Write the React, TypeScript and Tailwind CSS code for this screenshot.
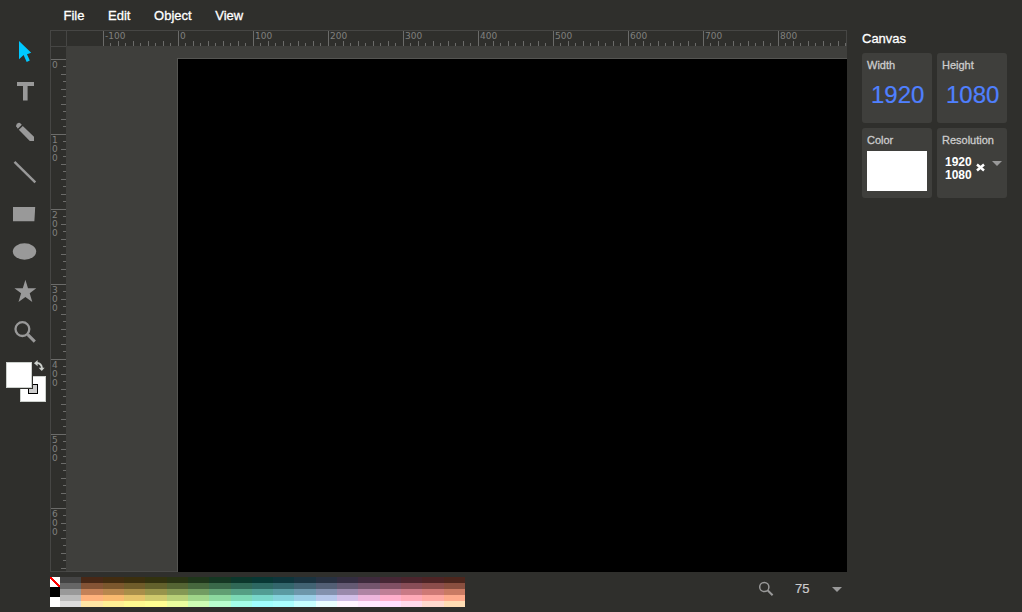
import React from 'react';

const MENUS = ['File', 'Edit', 'Object', 'View'];

const PALETTE = [
  [
    '#444444', '#482816', '#422C10', '#3B2F0E', '#32320F', '#2A3414', '#1F361B', '#153723', '#0C372C', '#083734',
    '#0E353B', '#1A333F', '#273141', '#332D40', '#3E2A3C', '#462735', '#4B252D', '#4D2425', '#4C261D',
  ],
  [
    '#666666', '#845335', '#7B572D', '#6F5C2A', '#62612C', '#546433', '#46673D', '#396849', '#306856', '#2D6862',
    '#33666C', '#426373', '#535F75', '#645A73', '#74556D', '#805064', '#884D57', '#8B4D4B', '#894F3F',
  ],
  [
    '#999999', '#C48157', '#B8874D', '#A98E49', '#97944B', '#849854', '#729C62', '#619E73', '#559E84', '#529D94',
    '#5B9BA2', '#6D97AB', '#8391AE', '#9A8AAB', '#AF84A3', '#BF7F96', '#C97A86', '#CE7975', '#CA7B63',
  ],
  [
    '#BBBBBB', '#FFB27C', '#FABA6F', '#E6C36A', '#CFCA6D', '#B8D078', '#A0D58A', '#8DD8A0', '#7DD8B5', '#79D7CA',
    '#84D3DB', '#9ACEE6', '#B6C7EA', '#D2BFE7', '#EEB6DC', '#FFAFCC', '#FFAAB8', '#FFA9A2', '#FFAB8C',
  ],
  [
    '#DDDDDD', '#FFE6A5', '#FFF095', '#FFFA90', '#FFFF92', '#EBFF9F', '#CEFFB5', '#BAFFD0', '#A5FFEA', '#A1FFFF',
    '#ABFFFF', '#C7FFFF', '#EAFFFF', '#FFF6FF', '#FFEBFF', '#FFE0FF', '#FFDBEC', '#FFDACF', '#FFDDB4',
  ],
];

// 10 canvas units at 75% zoom
const STEP = 7.5;

function TopRuler() {
  const ticks = Array.from({ length: 100 }, (_, i) => i);
  const labels = Array.from({ length: 10 }, (_, i) => i);
  return (
    <svg width="779" height="15" className="block" shapeRendering="crispEdges">
      {ticks.map((i) => {
        const h = i % 10 === 0 ? 15 : i % 2 === 0 ? 5 : 3;
        return <rect key={i} x={36 + Math.floor(i * STEP)} y={15 - h} width="1" height={h} fill="#6b6b69" />;
      })}
      {labels.map((i) => (
        <text key={i} x={38 + i * 75} y="8" fontSize="9" fill="#80807e" fontFamily="DejaVu Sans, sans-serif">
          {(i - 1) * 100}
        </text>
      ))}
    </svg>
  );
}

function LeftRuler() {
  const ticks = Array.from({ length: 69 }, (_, i) => i);
  const labels = Array.from({ length: 7 }, (_, i) => String(i * 100));
  const top = (i: number) => 12 + Math.floor(i * STEP) - (i >= 54 ? 1 : 0);
  return (
    <svg width="15" height="524" className="block" shapeRendering="crispEdges">
      {ticks.map((i) => {
        const w = i % 10 === 0 ? 15 : i % 2 === 0 ? 5 : 3;
        return <rect key={i} x={15 - w} y={top(i)} width={w} height="1" fill="#6b6b69" />;
      })}
      {labels.map((label, i) =>
        label.split('').map((digit, n) => (
          <text
            key={`${label}-${n}`}
            x="1"
            y={top(i * 10) + 9 + n * 9}
            fontSize="9"
            fill="#80807e"
            fontFamily="DejaVu Sans, sans-serif"
          >
            {digit}
          </text>
        ))
      )}
    </svg>
  );
}

const TOOLS = [
  {
    name: 'select',
    art: <path d="M19 9V27.2L23.6 23L26.7 30L29.8 28.6L27 22.2L31.2 20.8Z" fill="#00c8ff" />,
  },
  { name: 'text', art: <path d="M17 10H34V14H27.6V28.6H23V14H17Z" /> },
  {
    name: 'pencil',
    art: (
      <>
        <path d="M16.2 14.2Q15.6 12.8 17.3 11.4Q18.8 10.2 20 11L21.8 12.8L17.8 16.8Z" />
        <path d="M18.8 17.8L22.8 13.9L34 24.8V29H29.8Z" />
      </>
    ),
  },
  { name: 'line', art: <path d="M14.5 9.8L35.3 30.4" stroke="#999" strokeWidth="2.4" fill="none" /> },
  { name: 'rect', art: <path d="M13 15H35.2L34.4 29.2H13Z" /> },
  { name: 'ellipse', art: <ellipse cx="24.5" cy="19.5" rx="11.7" ry="8.2" /> },
  {
    name: 'star',
    art: <path d="M25.4 7.8L28 16.2H36.3L29.7 21.3L32.3 30L25.4 24.9L18.5 30L21.1 21.3L14.4 16.2H22.8Z" />,
  },
  {
    name: 'zoom',
    art: (
      <g fill="none" stroke="#999">
        <circle cx="22.4" cy="17.1" r="6.9" strokeWidth="2.3" />
        <path d="M27.8 22.6L34.8 29.6" strokeWidth="3" />
      </g>
    ),
  },
];

function Toolbar() {
  return (
    <aside className="w-[50px] shrink-0 pt-8">
      {TOOLS.map((tool) => (
        <button key={tool.name} aria-label={tool.name} className="block h-10 w-[50px]">
          <svg width="50" height="40" fill="#999" className="block">
            {tool.art}
          </svg>
        </button>
      ))}
      <div className="relative h-[60px] w-[50px]">
        <div className="absolute left-[20px] top-[24px] h-[26px] w-[26px] border border-[#ccd0cc] bg-white" />
        <div className="absolute left-[28px] top-[32px] h-[10px] w-[10px] border border-black bg-[#ccc]" />
        <div className="absolute left-[5px] top-[9px] h-[28px] w-[28px] border border-[#2f2f2c] bg-[#ccd0cc] p-px">
          <div className="h-full w-full bg-white" />
        </div>
        <svg width="12" height="12" className="absolute left-[34px] top-[8px]" fill="#ccd0cc">
          <path d="M3 3Q7.5 3.2 8 8.3" fill="none" stroke="#ccd0cc" strokeWidth="1.8" />
          <path d="M0 3.2L3.6 0V6.2Z" />
          <path d="M4.7 7.7H10.6L7.8 11Z" />
        </svg>
      </div>
    </aside>
  );
}

function Workspace() {
  return (
    <div className="grid h-[542px] w-[797px] grid-cols-[15px_1fr] grid-rows-[15px_1fr] border-l border-t border-[#464644]">
      <div />
      <div className="border-l border-r border-[#464644]">
        <TopRuler />
      </div>
      <div className="border-b border-t border-[#464644]">
        <LeftRuler />
      </div>
      <div className="flex bg-[#3f3f3c]">
        <div className="w-[111px] border-b border-[#4a4a48]" />
        <div className="mt-3 flex-1 border-l border-t border-[#555552] bg-black" />
      </div>
    </div>
  );
}

function Palette() {
  return (
    <div className="mt-[5px] flex h-[30px] w-[415px]">
      <div className="w-[10px]">
        <svg width="10" height="10" className="block bg-white" shapeRendering="crispEdges">
          <path d="M0 0L10 10" stroke="#f00" strokeWidth="2" />
        </svg>
        <div className="h-[10px] bg-black" />
        <div className="h-[10px] bg-white" />
      </div>
      <div className="flex flex-1 flex-col">
        {PALETTE.map((row) => (
          <div key={row[0]} className="flex h-[6px]">
            {row.map((color) => (
              <div key={color} className="flex-1" style={{ backgroundColor: color }} />
            ))}
          </div>
        ))}
      </div>
    </div>
  );
}

function Footer() {
  return (
    <footer className="flex h-10 justify-between">
      <Palette />
      <div className="flex h-[34px] items-center pr-[5px] text-[13px] text-[#ccc]">
        <svg width="16" height="16" fill="none" stroke="#999" className="mr-[21px]">
          <circle cx="6.3" cy="6" r="4.6" strokeWidth="1.5" />
          <path d="M9.8 9.5L14.6 14.2" strokeWidth="2" />
        </svg>
        <span className="w-[37px] [-webkit-text-stroke:0.2px]">75</span>
        <svg width="10" height="5" fill="#999">
          <path d="M0 0H10L5 5Z" />
        </svg>
      </div>
    </footer>
  );
}

function Field({ label, children }: { label: string; children: React.ReactNode }) {
  return (
    <div className="h-[70px] w-[70px] rounded-[3px] bg-[#3f3f3c] px-[5px] pt-[5px]">
      <div className="text-[11px] leading-[14px] text-[#ccc] [-webkit-text-stroke:0.3px]">{label}</div>
      {children}
    </div>
  );
}

function CanvasPanel() {
  return (
    <aside className="w-[175px] pl-[15px] pt-[31px]">
      <h2 className="mb-[6px] text-[13px] leading-4 text-white [-webkit-text-stroke:0.3px]">Canvas</h2>
      <div className="grid w-[145px] grid-cols-2 gap-[5px]">
        <Field label="Width">
          <div className="pl-[4px] pt-[8px] text-2xl leading-[30px] text-[#4f80ff] [-webkit-text-stroke:0.2px]">1920</div>
        </Field>
        <Field label="Height">
          <div className="pl-[4px] pt-[8px] text-2xl leading-[30px] text-[#4f80ff] [-webkit-text-stroke:0.2px]">1080</div>
        </Field>
        <Field label="Color">
          <div className="mt-1 h-10 w-[60px] bg-white" />
        </Field>
        <Field label="Resolution">
          <div className="flex pl-[3px] pt-[9px] text-white">
            <div className="w-[27px] text-xs font-bold leading-[13px]">
              <div>1920</div>
              <div>1080</div>
            </div>
            <svg width="9" height="9" className="ml-1 mt-[7px]" stroke="#fff" strokeWidth="2.5">
              <path d="M1 1.5L8 7.5M8 1.5L1 7.5" />
            </svg>
            <svg width="10" height="5" fill="#999" className="ml-[7px] mt-[5px] shrink-0">
              <path d="M0 0H10L5 5Z" />
            </svg>
          </div>
        </Field>
      </div>
    </aside>
  );
}

export default function App() {
  return (
    <div className="flex h-[612px] w-[1022px] overflow-hidden bg-[#2f2f2c] font-['Liberation_Sans',Arial,sans-serif]">
      <Toolbar />
      <main className="w-[797px] shrink-0">
        <nav className="flex h-[30px] items-center gap-[23.6px] pl-[13.5px] pt-[2px] text-[13px] text-white [-webkit-text-stroke:0.3px]">
          {MENUS.map((menu) => (
            <span key={menu}>{menu}</span>
          ))}
        </nav>
        <Workspace />
        <Footer />
      </main>
      <CanvasPanel />
    </div>
  );
}
